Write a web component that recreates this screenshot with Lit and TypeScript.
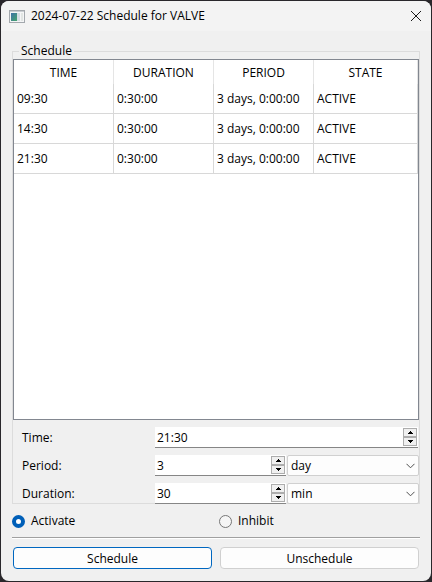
import { LitElement, html, css } from "lit";
import { customElement, property, state } from "lit/decorators.js";

@customElement("spin-box")
class SpinBox extends LitElement {
  @property() value = "";
  @property() label = "";

  static styles = css`
    :host {
      display: block;
      min-width: 0;
    }
    .box {
      display: flex;
      box-sizing: border-box;
      height: 21px;
      background: #fff;
      border-bottom: 1px solid #868686;
    }
    .field {
      flex: 1;
      min-width: 0;
      border: 0;
      outline: 0;
      padding: 2px 2px 0;
      background: transparent;
      color: #000;
      font: inherit;
    }
    .steps {
      display: flex;
      flex-direction: column;
      width: 14px;
      height: 18px;
      margin: 1px 1px 0 0;
    }
    .step {
      display: flex;
      flex: 1;
      align-items: center;
      justify-content: center;
      box-sizing: border-box;
      padding: 0;
      border: 1px solid #adadad;
      border-radius: 0;
      background: #f0f0f0;
    }
    .step svg {
      display: block;
      width: 5px;
      height: 3px;
    }
  `;

  private step(by: number) {
    const [head, ...rest] = this.value.split(":");
    const next = String(Math.max(0, Number(head) + by));
    this.value = [rest.length ? next.padStart(2, "0") : next, ...rest].join(":");
  }

  render() {
    return html`
      <div class="box">
        <input
          class="field"
          type="text"
          aria-label=${this.label}
          .value=${this.value}
          @change=${(e: Event) => (this.value = (e.target as HTMLInputElement).value)}
        />
        <div class="steps">
          <button class="step" type="button" aria-label="Increase" @click=${() => this.step(1)}>
            <svg viewBox="0 0 5 3" shape-rendering="crispEdges"><path d="M2 0h1v1h1v1h1v1H0V2h1V1h1z" /></svg>
          </button>
          <button class="step" type="button" aria-label="Decrease" @click=${() => this.step(-1)}>
            <svg viewBox="0 0 5 3" shape-rendering="crispEdges"><path d="M0 0h5v1H4v1H3v1H2V2H1V1H0z" /></svg>
          </button>
        </div>
      </div>
    `;
  }
}

@customElement("app-root")
class AppRoot extends LitElement {
  @state() private rows = [
    ["09:30", "0:30:00", "3 days, 0:00:00", "ACTIVE"],
    ["14:30", "0:30:00", "3 days, 0:00:00", "ACTIVE"],
    ["21:30", "0:30:00", "3 days, 0:00:00", "ACTIVE"],
  ];

  static styles = css`
    :host {
      display: flex;
      box-sizing: border-box;
      min-height: 100vh;
      padding: 1px;
      background: #29272b;
      color: #000;
      font: 12px/16px "Open Sans", "Noto Sans", sans-serif;
    }
    .window {
      display: flex;
      flex: 1;
      flex-direction: column;
      min-width: 0;
      border-radius: 8px;
      overflow: hidden;
      background: #f0f0f0;
    }
    .titlebar {
      display: flex;
      align-items: center;
      height: 30px;
      padding: 0 8px;
      background: #f3f3f3;
    }
    .app-icon {
      width: 16px;
      height: 13px;
      margin-right: 6px;
    }
    .title {
      flex: 1;
      margin: 0;
      font: inherit;
    }
    .close {
      display: flex;
      padding: 1px;
      border: 0;
      background: transparent;
    }
    .close svg {
      width: 12px;
      height: 12px;
    }
    .body {
      display: flex;
      flex: 1;
      flex-direction: column;
      padding: 12px 11px;
    }
    .group {
      display: flex;
      flex: 1;
      flex-direction: column;
      min-width: 0;
      margin: 0;
      padding: 0;
      border: 1px solid #dcdcdc;
    }
    .group legend {
      margin-left: 6px;
      padding: 0 2px;
    }
    .view {
      flex: 1;
      border: 1px solid #828790;
      background: #fff;
    }
    .table {
      width: 100%;
      table-layout: fixed;
      border-collapse: separate;
      border-spacing: 0;
    }
    .table .section {
      width: 100px;
    }
    .table th {
      box-sizing: border-box;
      height: 24px;
      padding: 2px 0 0;
      border-right: 1px solid #e5e5e5;
      font-weight: 400;
      text-align: center;
    }
    .table td {
      height: 29px;
      padding: 0 3px;
      border-right: 1px solid #d8d8d8;
      border-bottom: 1px solid #d8d8d8;
      white-space: nowrap;
    }
    .form {
      display: grid;
      grid-template-columns: 142px minmax(0, 1fr) minmax(0, 1fr);
      row-gap: 7px;
      align-items: center;
      margin-bottom: -1px;
      padding-top: 7px;
    }
    .form label {
      padding-left: 9px;
    }
    .form .wide {
      grid-column: span 2;
    }
    .form .cell {
      margin-right: 1px;
    }
    .combo {
      position: relative;
    }
    .combo select {
      display: block;
      appearance: none;
      box-sizing: border-box;
      width: 100%;
      height: 21px;
      padding: 0 20px 0 3px;
      border: 1px solid #d0d0d0;
      border-radius: 2px;
      background: #fdfdfd;
      color: #000;
      font: inherit;
      line-height: 18px;
    }
    .combo svg {
      position: absolute;
      top: 8px;
      right: 4px;
      width: 9px;
      height: 6px;
      pointer-events: none;
    }
    .modes {
      display: grid;
      box-sizing: border-box;
      grid-template-columns: 1fr 1fr;
      gap: 6px;
      height: 33px;
      padding-top: 1px;
      align-items: center;
    }
    .mode {
      display: flex;
      align-items: center;
      gap: 6px;
    }
    .mode input {
      appearance: none;
      box-sizing: border-box;
      width: 13px;
      height: 13px;
      margin: 0;
      border: 1px solid #767676;
      border-radius: 50%;
      background: #f5f5f5;
    }
    .mode input:checked {
      border: 4px solid #005fb8;
      background: #fff;
    }
    .rule {
      height: 1px;
      margin: 0;
      border: 0;
      border-top: 1px solid #a0a0a0;
      background: #fff;
    }
    .actions {
      display: grid;
      grid-template-columns: 1fr 1fr;
      gap: 8px;
      padding: 8px 1px 0;
    }
    .action {
      height: 22px;
      padding: 2px 0 0;
      border: 1px solid #d0d0d0;
      border-radius: 4px;
      background: #fdfdfd;
      color: #000;
      font: inherit;
    }
    .action.default {
      border-color: #0067c0;
    }
  `;

  private combo(id: string, selected: string, options: string[]) {
    return html`
      <div class="combo">
        <select id=${id} aria-label=${id}>
          ${options.map((o) => html`<option ?selected=${o === selected}>${o}</option>`)}
        </select>
        <svg viewBox="0 0 9 6" fill="none" stroke="#505050"><path d="M.5 .8l4 4 4-4" /></svg>
      </div>
    `;
  }

  render() {
    return html`
      <div class="window">
        <header class="titlebar">
          <svg class="app-icon" viewBox="0 0 16 13">
            <defs>
              <linearGradient id="pane" x1="0" y1="0" x2="1" y2="1">
                <stop offset="0" stop-color="#3f72a8" />
                <stop offset="1" stop-color="#45a56c" />
              </linearGradient>
            </defs>
            <rect x=".5" y=".5" width="15" height="12" fill="#f4f5f6" stroke="#a3a8ad" />
            <path d="M1 1.5h14" stroke="#c9cdd1" />
            <rect x="2" y="3" width="6" height="8" fill="url(#pane)" />
            <rect x="8" y="3" width="3" height="8" fill="#d5dde3" />
            <rect x="12" y="3" width="2" height="8" fill="#e1e5e3" />
          </svg>
          <h1 class="title">2024-07-22 Schedule for VALVE</h1>
          <button class="close" type="button" aria-label="Close">
            <svg viewBox="0 0 12 12" stroke="#1a1a1a"><path d="M1 1l10 10M11 1L1 11" /></svg>
          </button>
        </header>
        <main class="body">
          <fieldset class="group">
            <legend>Schedule</legend>
            <div class="view">
              <table class="table">
                <colgroup>
                  <col class="section" span="3" />
                  <col />
                </colgroup>
                <thead>
                  <tr>
                    ${["TIME", "DURATION", "PERIOD", "STATE"].map((h) => html`<th scope="col">${h}</th>`)}
                  </tr>
                </thead>
                <tbody>
                  ${this.rows.map((r) => html`<tr>${r.map((c) => html`<td>${c}</td>`)}</tr>`)}
                </tbody>
              </table>
            </div>
            <div class="form">
              <label for="time">Time:</label>
              <spin-box id="time" class="wide cell" label="Time" value="21:30"></spin-box>
              <label for="period">Period:</label>
              <spin-box id="period" class="cell" label="Period" value="3"></spin-box>
              ${this.combo("period-unit", "day", ["hour", "day", "week"])}
              <label for="duration">Duration:</label>
              <spin-box id="duration" class="cell" label="Duration" value="30"></spin-box>
              ${this.combo("duration-unit", "min", ["sec", "min", "hour"])}
            </div>
          </fieldset>
          <div class="modes">
            <label class="mode"><input type="radio" name="mode" checked />Activate</label>
            <label class="mode"><input type="radio" name="mode" />Inhibit</label>
          </div>
          <hr class="rule" />
          <div class="actions">
            <button class="action default" type="button">Schedule</button>
            <button class="action" type="button">Unschedule</button>
          </div>
        </main>
      </div>
    `;
  }
}
